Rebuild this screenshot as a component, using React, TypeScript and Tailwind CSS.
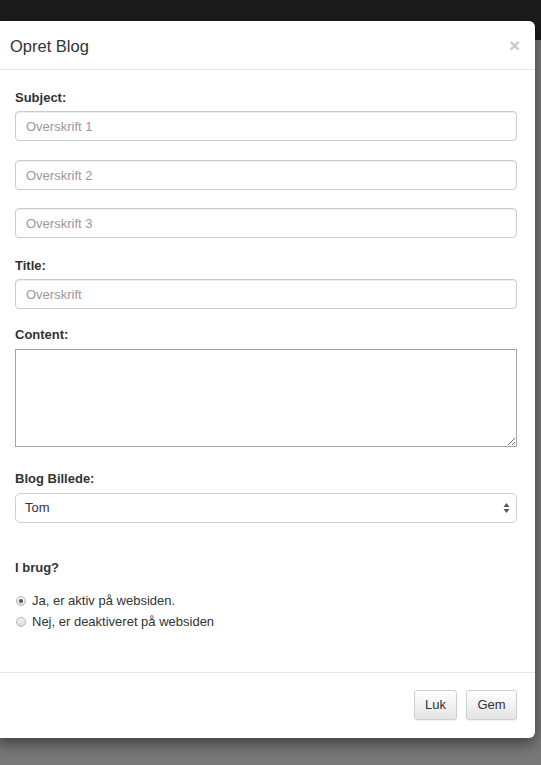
import React from 'react';

const Label: React.FC<{ text: string; className?: string }> = ({ text, className = '' }) => (
    <div className={`h-[18px] text-[13px] font-bold leading-[18px] text-[#333] ${className}`}>{text}</div>
);

const TextInput: React.FC<{ placeholder: string; className?: string }> = ({ placeholder, className = '' }) => (
    <input
        type="text"
        placeholder={placeholder}
        className={`block h-[30px] w-full rounded-[4px] border border-[#ccc] bg-white px-[10px] text-[13px] text-[#555] shadow-[inset_0_1px_1px_rgba(0,0,0,0.075)] outline-none placeholder:text-[#999] ${className}`}
    />
);

const Radio: React.FC<{ checked?: boolean; label: string; className?: string }> = ({ checked, label, className = '' }) => (
    <div className={`flex h-[18px] items-center ${className}`}>
        <span className="ml-[1px] flex h-[10px] w-[10px] items-center justify-center rounded-full border border-[#b5b5b5] bg-gradient-to-b from-[#f4f4f4] to-[#dcdcdc]">
            {checked && <span className="h-[4px] w-[4px] rounded-full bg-[#555]" />}
        </span>
        <span className="ml-[6px] text-[13px] leading-[18px] text-[#333]">{label}</span>
    </div>
);

const Button: React.FC<{ text: string; className?: string }> = ({ text, className = '' }) => (
    <button
        type="button"
        className={`h-[30px] rounded-[3px] border border-[#cfcfcf] bg-gradient-to-b from-white to-[#e4e4e4] text-[13px] text-[#333] shadow-[0_1px_1px_rgba(0,0,0,0.06)] ${className}`}
    >
        {text}
    </button>
);

const App: React.FC = () => {
    return (
        <div className="relative h-[765px] w-full overflow-hidden bg-[#787878] font-['Liberation_Sans',Arial,sans-serif]">
            <div className="h-[40px] bg-[#1b1b1b]" />

            {/* modal */}
            <div className="absolute left-[-5px] top-[21px] w-[540px] rounded-[6px] bg-white shadow-[0_5px_15px_rgba(0,0,0,0.5)]">
                <div className="flex h-[49px] items-center justify-between border-b border-[#e5e5e5] px-[15px]">
                    <h4 className="pt-[2px] text-[16.5px] leading-[20px] text-[#333]">Opret Blog</h4>
                    <span className="text-[19px] font-bold leading-none text-[#c9c9c9]">×</span>
                </div>

                <div className="pb-[41px] pl-[20px] pr-[18px] pt-[19px]">
                    <Label text="Subject:" className="mb-[4px]" />
                    <TextInput placeholder="Overskrift 1" />
                    <TextInput placeholder="Overskrift 2" className="mt-[19px]" />
                    <TextInput placeholder="Overskrift 3" className="mt-[18px]" />

                    <Label text="Title:" className="mb-[4px] mt-[19px]" />
                    <TextInput placeholder="Overskrift" />

                    <Label text="Content:" className="mb-[5px] mt-[17px]" />
                    <textarea className="block h-[98px] w-full resize rounded-none border border-[#a3a3a3] bg-white outline-none" />

                    <Label text="Blog Billede:" className="mb-[5px] mt-[23px]" />
                    <div className="flex h-[30px] w-full items-center justify-between rounded-[5px] border border-[#d0d0d0] bg-white pl-[9px] pr-[6px]">
                        <span className="text-[13px] text-[#333]">Tom</span>
                        <svg width="7" height="12" viewBox="0 0 7 12">
                            <path d="M3.5 1 L6.5 5 L0.5 5 Z" fill="#555" />
                            <path d="M3.5 11 L6.5 7 L0.5 7 Z" fill="#555" />
                        </svg>
                    </div>

                    <Label text="I brug?" className="mt-[36px]" />
                    <Radio checked label="Ja, er aktiv på websiden." className="mt-[15px]" />
                    <Radio label="Nej, er deaktiveret på websiden" className="mt-[3px]" />
                </div>

                <div className="flex justify-end gap-[9px] border-t border-[#e5e5e5] pb-[18px] pl-[15px] pr-[18px] pt-[17px]">
                    <Button text="Luk" className="w-[43px]" />
                    <Button text="Gem" className="w-[51px]" />
                </div>
            </div>
        </div>
    );
};

export default App;
